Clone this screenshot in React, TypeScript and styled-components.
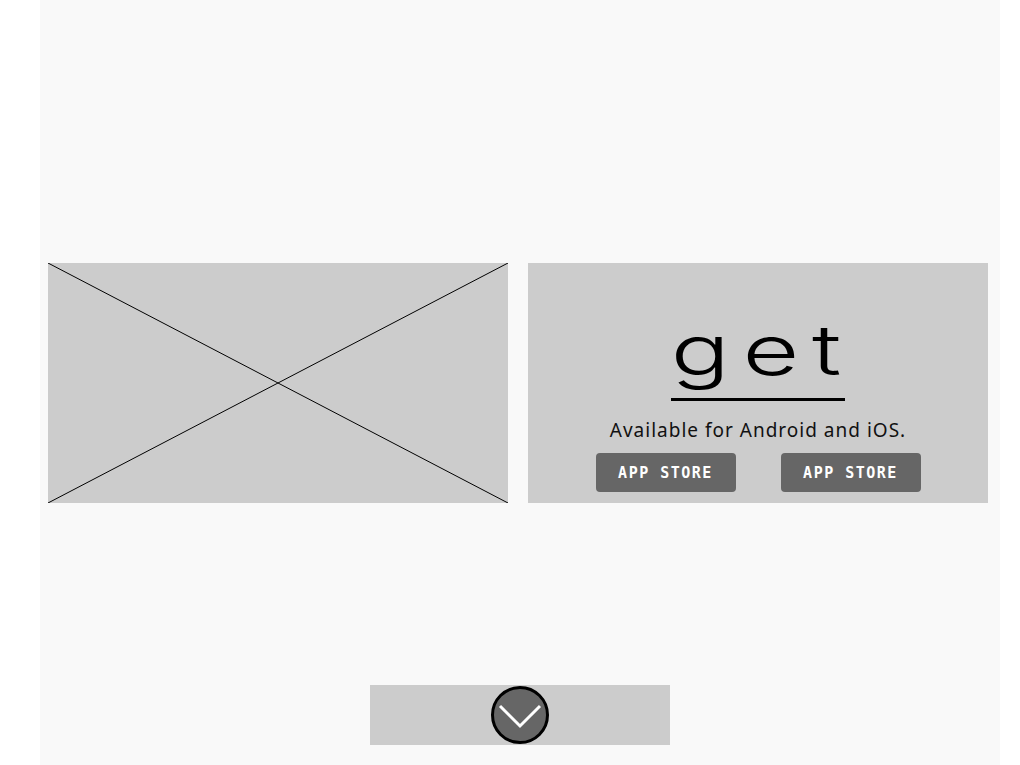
import React from "react";
import styled, { createGlobalStyle } from "styled-components";

const GlobalStyle = createGlobalStyle`
  html, body {
    margin: 0;
    padding: 0;
    background: #ffffff;
  }
  * { box-sizing: border-box; }
`;

const Page = styled.div`
  width: 960px;
  height: 765px;
  margin-left: 40px;
  background: #f9f9f9;
  display: flex;
  flex-direction: column;
  align-items: flex-start;
  padding: 263px 12px 20px 8px;
`;

const Row = styled.div`
  display: grid;
  grid-template-columns: 460px 460px;
  gap: 20px;
`;

const Panel = styled.div`
  position: relative;
  height: 240px;
  background: #cccccc;
`;

const Placeholder = styled(Panel)`
  svg {
    display: block;
  }
`;

const Promo = styled(Panel)`
  display: flex;
  flex-direction: column;
  align-items: center;
  justify-content: flex-end;
  padding-bottom: 11px;
`;

const Logo = styled.div`
  width: 174px;
  height: 74px;
  border-bottom: 3px solid #000;
  margin-bottom: 17px;
  display: flex;
  justify-content: center;
  overflow: visible;
`;

const LogoText = styled.span`
  display: inline-block;
  font-family: "Inter", "DejaVu Sans", sans-serif;
  font-weight: 300;
  font-size: 70px;
  line-height: 70px;
  letter-spacing: 9px;
  margin-right: -9px;
  color: #000;
  transform: scaleX(1.4);
  transform-origin: center top;
  margin-top: -12px;
`;

const Tagline = styled.p`
  margin: 0 0 11px;
  font-family: "Noto Sans", "Open Sans", sans-serif;
  font-size: 19px;
  line-height: 24px;
  letter-spacing: 1px;
  color: #111;
`;

const Buttons = styled.div`
  display: flex;
  gap: 45px;
`;

const StoreButton = styled.button`
  width: 140px;
  height: 39px;
  border: none;
  border-radius: 4px;
  background: #666666;
  color: #ffffff;
  font-family: "DejaVu Sans Mono", "Liberation Mono", monospace;
  font-weight: bold;
  font-size: 15px;
  letter-spacing: 1.5px;
  cursor: pointer;
`;

const Footer = styled.div`
  margin-top: auto;
  align-self: center;
  margin-left: 4px;
  width: 300px;
  height: 60px;
  background: #cccccc;
  display: flex;
  align-items: center;
  justify-content: center;
`;

const ScrollButton = styled.button`
  width: 58px;
  height: 58px;
  border-radius: 50%;
  border: 3px solid #000;
  background: #666666;
  padding: 0;
  display: flex;
  align-items: center;
  justify-content: center;
  cursor: pointer;
`;

export default function App() {
  return (
    <>
      <GlobalStyle />
      <Page>
        <Row>
          <Placeholder>
            <svg width="460" height="240" viewBox="0 0 460 240">
              <line x1="0" y1="0" x2="460" y2="240" stroke="#000" strokeWidth="1" />
              <line x1="460" y1="0" x2="0" y2="240" stroke="#000" strokeWidth="1" />
            </svg>
          </Placeholder>
          <Promo>
            <Logo>
              <LogoText>get</LogoText>
            </Logo>
            <Tagline>Available for Android and iOS.</Tagline>
            <Buttons>
              <StoreButton>APP STORE</StoreButton>
              <StoreButton>APP STORE</StoreButton>
            </Buttons>
          </Promo>
        </Row>
        <Footer>
          <ScrollButton aria-label="scroll down">
            <svg width="44" height="30" viewBox="0 0 44 30">
              <polyline points="2,6 22,26 42,6" fill="none" stroke="#fff" strokeWidth="3" />
            </svg>
          </ScrollButton>
        </Footer>
      </Page>
    </>
  );
}
